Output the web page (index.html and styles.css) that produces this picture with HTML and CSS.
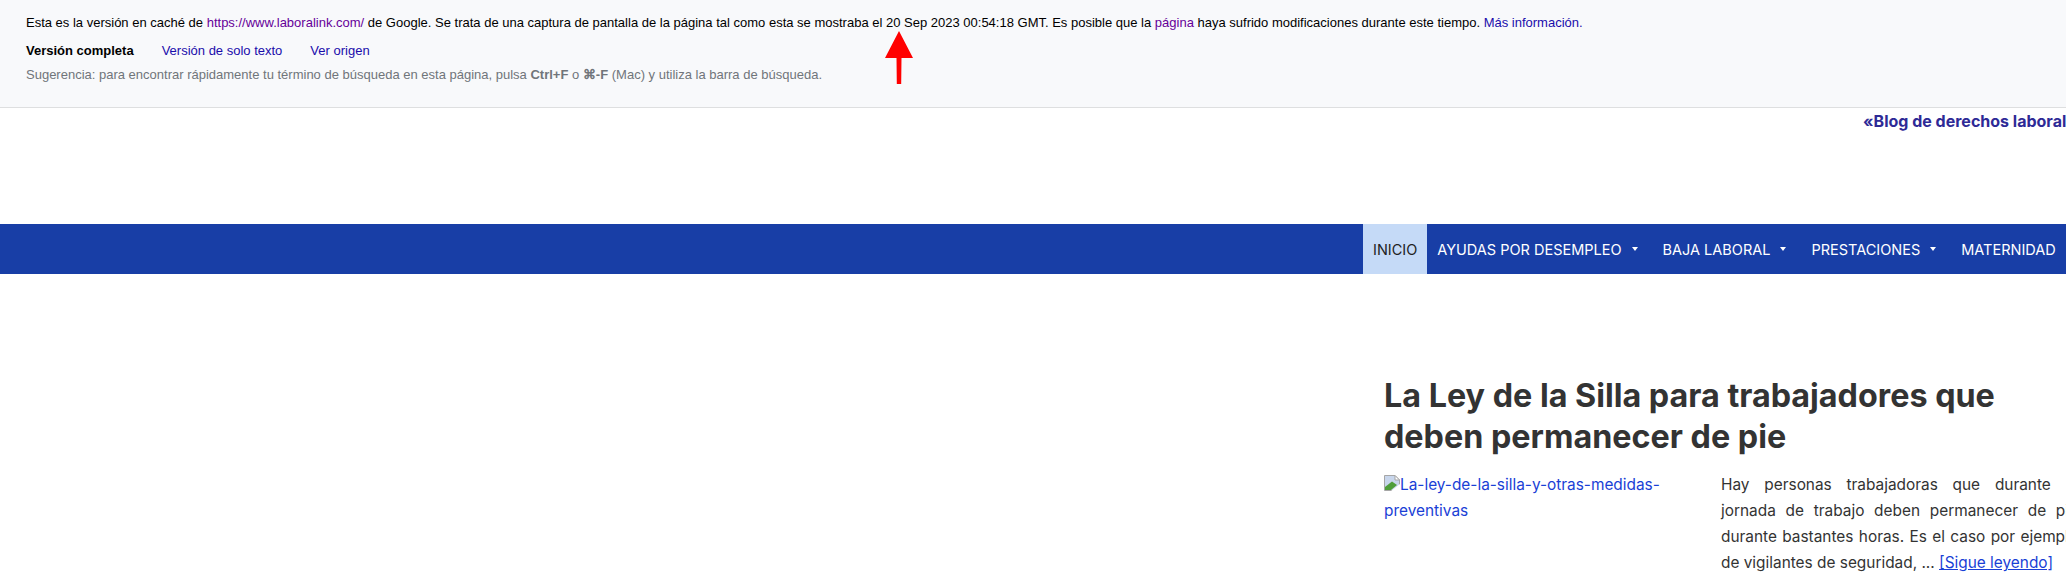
FILE: index.html
```html
<!DOCTYPE html>
<html lang="es">
<head>
    <meta charset="UTF-8">
    <meta name="viewport" content="width=device-width, initial-scale=1.0">
    <title>La Ley de la Silla</title>
    <link rel="stylesheet" href="styles.css">
</head>
<body>
    <!-- Cache banner -->
    <div class="cache-banner">
        <p class="cache-line">Esta es la versión en caché de <a class="visited" href="#">https://www.laboralink.com/</a> de Google. Se trata de una captura de pantalla de la página tal como esta se mostraba el 20 Sep 2023 00:54:18 GMT. Es posible que la <a class="visited" href="#">página</a> haya sufrido modificaciones durante este tiempo. <a href="#">Más información.</a></p>
        <div class="cache-links">
            <b>Versión completa</b>
            <a href="#">Versión de solo texto</a>
            <a href="#">Ver origen</a>
        </div>
        <p class="cache-tip">Sugerencia: para encontrar rápidamente tu término de búsqueda en esta página, pulsa <b>Ctrl+F</b> o <b>⌘-F</b> (Mac) y utiliza la barra de búsqueda.</p>
        <svg class="arrow" width="28" height="53" viewBox="0 0 28 53">
            <path d="M14 0 L28 27 L16.5 27 L16.2 53 L11.8 53 L11.5 27 L0 27 Z" fill="#ff0000"/>
        </svg>
    </div>

    <!-- Page -->
    <div class="page">
        <div class="blog-link"><a href="#">«Blog de derechos laborales»</a></div>

        <nav class="menu">
            <a class="menu-item active" href="#">INICIO</a>
            <a class="menu-item has-sub" href="#">AYUDAS POR DESEMPLEO</a>
            <a class="menu-item has-sub" href="#">BAJA LABORAL</a>
            <a class="menu-item has-sub" href="#">PRESTACIONES</a>
            <a class="menu-item" href="#">MATERNIDAD</a>
        </nav>

        <div class="content">
            <article class="post">
                <h1>La Ley de la Silla para trabajadores que deben permanecer de pie</h1>
                <div class="post-body">
                    <a class="post-thumb" href="#"><svg class="broken" width="16" height="16" viewBox="0 0 16 16">
                        <path d="M0.5 0.5 H11 L15.5 5 V15.5 H0.5 Z" fill="#c8d6ec" stroke="#a6a6a6" stroke-width="1"/>
                        <path d="M11 0.5 V5 H15.5 Z" fill="#fff" stroke="#a6a6a6" stroke-width="1"/>
                        <path d="M1 15 V12 L8 6.5 L13 10 L7 15 Z" fill="#4f9e3a"/>
                        <path d="M7 16 L16 9 V16 Z" fill="#fff"/>
                    </svg>La-ley-de-la-silla-y-otras-medidas-preventivas</a>
                    <p>Hay personas trabajadoras que durante la jornada de trabajo deben permanecer de pie durante bastantes horas. Es el caso por ejemplo de vigilantes de seguridad, ... <a href="#">[Sigue leyendo]</a></p>
                </div>
            </article>
        </div>
    </div>
</body>
</html>
```

FILE: styles.css
```css
html, body {
    margin: 0;
    padding: 0;
    height: 584px;
    overflow: hidden;
    background-color: #fff;
}

body {
    font-family: 'Inter', sans-serif;
    width: 2066px;
}

/* Cache banner */
.cache-banner {
    position: relative;
    box-sizing: border-box;
    height: 108px;
    padding: 15px 26px 0;
    background-color: #f8f9fb;
    border-bottom: 1px solid #dedfe0;
    font-family: 'Liberation Sans', Arial, sans-serif;
    font-size: 13px;
    line-height: 16px;
    color: #000;
}

.cache-banner a {
    color: #1a0dab;
    text-decoration: none;
}

.cache-banner a.visited {
    color: #609;
}

.cache-line {
    margin: 0;
}

.cache-links {
    display: flex;
    gap: 28px;
    margin-top: 12px;
}

.cache-tip {
    margin: 8px 0 0;
    color: #70757a;
}

.arrow {
    position: absolute;
    left: 885px;
    top: 31px;
}

/* Page */
.page {
    width: 2300px;
}

.blog-link {
    height: 116px;
    padding: 1px 0 0 1863px;
    box-sizing: border-box;
    font-size: 16px;
    font-weight: 700;
    line-height: 24px;
}

.blog-link a {
    color: #2e2a96;
    text-decoration: none;
}

.menu {
    display: flex;
    height: 50px;
    padding-left: 1363px;
    background-color: #183ea6;
}

.menu-item {
    display: flex;
    align-items: center;
    padding: 0 10px;
    color: #fff;
    font-size: 14.5px;
    text-decoration: none;
}

.menu-item.active {
    background-color: #c5daf7;
    color: #222;
}

.menu-item.has-sub::after {
    content: "";
    margin: 0 5px 0 10px;
    border-left: 3px solid transparent;
    border-right: 3px solid transparent;
    border-top: 4px solid #fff;
}

.content {
    padding: 101px 0 0 1384px;
}

.post {
    width: 720px;
}

.post h1 {
    margin: 0 0 15px;
    width: 680px;
    font-size: 32.3px;
    line-height: 41px;
    font-weight: 700;
    color: #333;
}

.post-body {
    display: flex;
    gap: 37px;
    font-size: 15.4px;
    line-height: 26px;
    color: #333;
}

.post-thumb {
    flex: 0 0 300px;
    color: #1a3fd6;
    text-decoration: none;
}

.broken {
    vertical-align: -1px;
}

.post-body p {
    margin: 0;
    flex: 0 0 357px;
    text-align: justify;
}

.post-body p a {
    color: #1a3fd6;
}
```
